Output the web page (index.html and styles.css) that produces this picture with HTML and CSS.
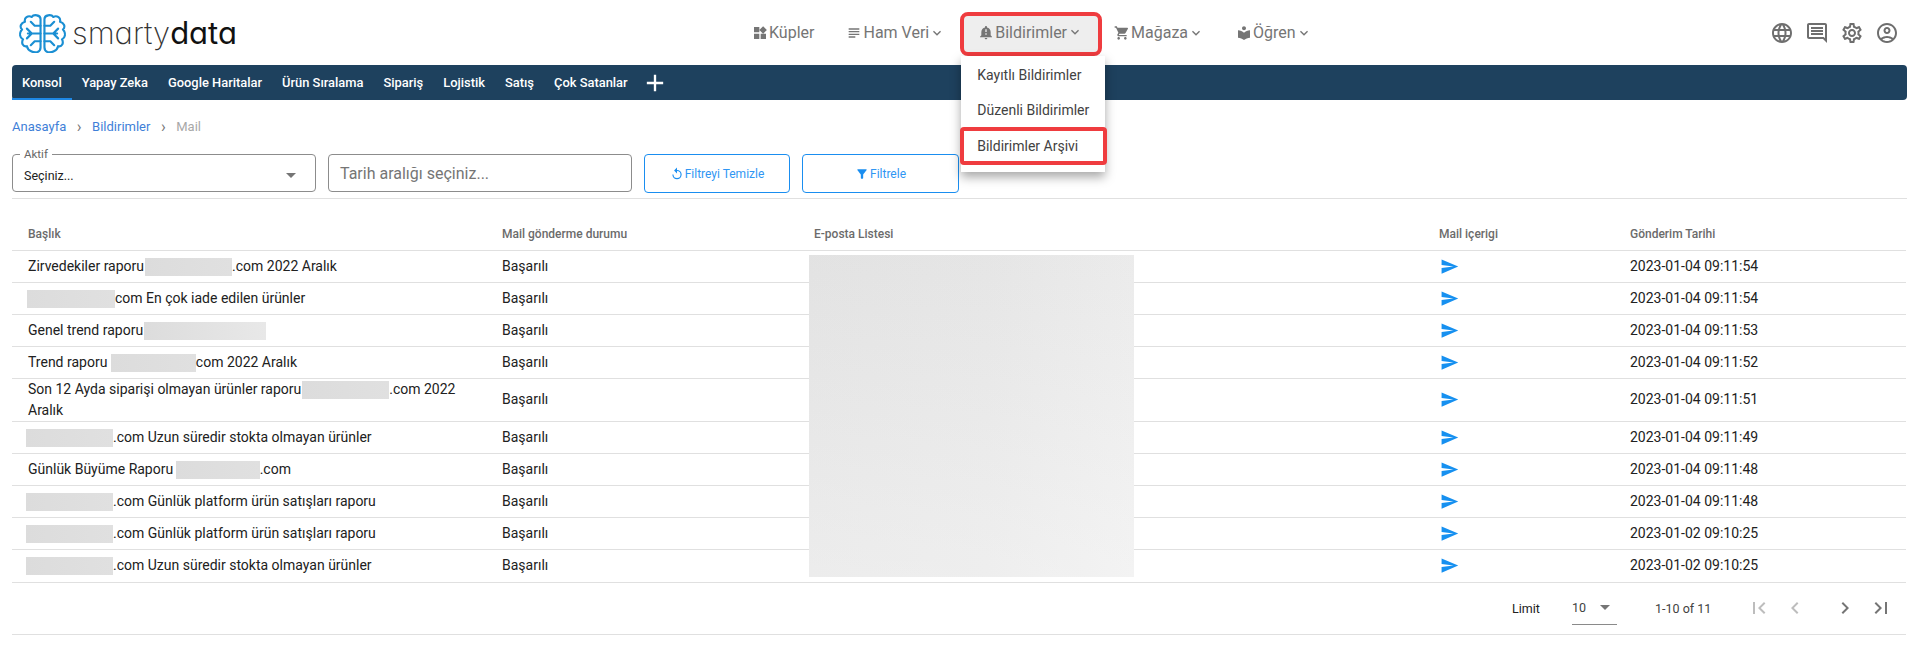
FILE: index.html
```html
<!DOCTYPE html>
<html lang="tr">

<head>
  <meta charset="UTF-8">
  <meta name="viewport" content="width=device-width, initial-scale=1.0">
  <title>Bildirimler - Mail</title>
  <link rel="stylesheet" href="styles.css">
</head>

<body>
  <svg class="sprite" aria-hidden="true">
    <symbol id="i-chevron" viewBox="0 0 24 24"><path d="M16.59 8.59 12 13.17 7.41 8.59 6 10l6 6 6-6z"/></symbol>
    <symbol id="i-send" viewBox="0 0 24 24"><path d="M2.01 21 23 12 2.01 3 2 10l15 2-15 2z"/></symbol>
    <symbol id="i-lobe" viewBox="0 0 24 40">
      <g fill="none" stroke="#1b8fd3" stroke-width="2.2" stroke-linecap="round" stroke-linejoin="round">
        <path d="M22 5C22 1 15 0 13 3 9 1 5 4 6 8 2 9 0 13 3 16 0 19 0 24 4 26 2 30 4 34 8 33 9 38 15 40 19 39 21 38 22 37 22 34Z"/>
        <path d="M22 12H16L12 8M22 20H9M13 20 8 15M13 20 8 25M22 28H16L12 32"/>
      </g>
    </symbol>
  </svg>

  <header class="topbar">
    <a class="logo" href="#">
      <svg class="logo-mark" viewBox="0 0 48 40">
        <use href="#i-lobe" x="0" y="0" width="24" height="40"/>
        <use href="#i-lobe" x="-48" y="0" width="24" height="40" transform="scale(-1 1)"/>
      </svg>
      <span class="logo-text">smarty<b>data</b></span>
    </a>

    <nav class="main-nav">
      <a class="nav-item">
        <svg class="nav-icon" viewBox="0 0 24 24"><path d="M13 13v8h8v-8h-8zM3 21h8v-8H3v8zM3 3v8h8V3H3zm13.66-1.31L11 7.34 16.66 13l5.66-5.66-5.66-5.65z"/></svg>
        Küpler
      </a>
      <a class="nav-item">
        <svg class="nav-icon" viewBox="0 0 24 24"><path d="M14 17H4v2h10v-2zm6-8H4v2h16V9zM4 15h16v-2H4v2zM4 5v2h16V5H4z"/></svg>
        Ham Veri
        <svg class="nav-chevron"><use href="#i-chevron"/></svg>
      </a>
      <div class="nav-item nav-item-open">
        <svg class="nav-icon" viewBox="0 0 24 24"><path d="M12 23c1.1 0 1.99-.89 1.99-1.99h-3.98c0 1.1.89 1.99 1.99 1.99zm7-6v-5c0-3.35-2.36-6.15-5.5-6.83V4.5c0-.83-.67-1.5-1.5-1.5s-1.5.67-1.5 1.5v.67C7.36 5.85 5 8.65 5 12v5l-2 2v1h18v-1l-2-2zm-6-1h-2v-2h2v2zm0-4h-2V8h2v4z"/></svg>
        Bildirimler
        <svg class="nav-chevron"><use href="#i-chevron"/></svg>
        <ul class="dropdown">
          <li>Kayıtlı Bildirimler</li>
          <li>Düzenli Bildirimler</li>
          <li class="marked">Bildirimler Arşivi</li>
        </ul>
      </div>
      <a class="nav-item">
        <svg class="nav-icon" viewBox="0 0 24 24"><path d="M7 18c-1.1 0-1.99.9-1.99 2S5.9 22 7 22s2-.9 2-2-.9-2-2-2zM1 2v2h2l3.6 7.59-1.35 2.45c-.16.28-.25.61-.25.96 0 1.1.9 2 2 2h12v-2H7.42c-.14 0-.25-.11-.25-.25l.03-.12.9-1.63h7.45c.75 0 1.41-.41 1.75-1.03l3.58-6.49c.08-.14.12-.31.12-.48 0-.55-.45-1-1-1H5.21l-.94-2H1zm16 16c-1.1 0-1.99.9-1.99 2s.89 2 1.99 2 2-.9 2-2-.9-2-2-2z"/></svg>
        Mağaza
        <svg class="nav-chevron"><use href="#i-chevron"/></svg>
      </a>
      <a class="nav-item">
        <svg class="nav-icon" viewBox="0 0 24 24"><path d="M12 11.55C9.64 9.35 6.48 8 3 8v11c3.48 0 6.64 1.35 9 3.55 2.36-2.19 5.52-3.55 9-3.55V8c-3.48 0-6.64 1.35-9 3.55zM12 8c1.66 0 3-1.34 3-3s-1.34-3-3-3-3 1.34-3 3 1.34 3 3 3z"/></svg>
        Öğren
        <svg class="nav-chevron"><use href="#i-chevron"/></svg>
      </a>
    </nav>

    <div class="top-icons">
      <svg viewBox="0 0 24 24"><path d="M11.99 2C6.47 2 2 6.48 2 12s4.47 10 9.99 10C17.52 22 22 17.52 22 12S17.52 2 11.99 2zm6.93 6h-2.95c-.32-1.25-.78-2.45-1.38-3.56 1.84.63 3.37 1.91 4.33 3.56zM12 4.04c.83 1.2 1.48 2.53 1.91 3.96h-3.82c.43-1.43 1.08-2.76 1.91-3.96zM4.26 14C4.1 13.36 4 12.69 4 12s.1-1.36.26-2h3.38c-.08.66-.14 1.32-.14 2s.06 1.34.14 2H4.26zm.82 2h2.95c.32 1.25.78 2.45 1.38 3.56-1.84-.63-3.37-1.9-4.33-3.56zm2.95-8H5.08c.96-1.66 2.49-2.93 4.33-3.56C8.81 5.55 8.35 6.75 8.03 8zM12 19.96c-.83-1.2-1.48-2.53-1.91-3.96h3.82c-.43 1.43-1.08 2.76-1.91 3.96zM14.34 14H9.66c-.09-.66-.16-1.32-.16-2s.07-1.35.16-2h4.68c.09.65.16 1.32.16 2s-.07 1.34-.16 2zm.25 5.56c.6-1.11 1.06-2.31 1.38-3.56h2.95c-.96 1.65-2.49 2.93-4.33 3.56zM16.36 14c.08-.66.14-1.32.14-2s-.06-1.34-.14-2h3.38c.16.64.26 1.31.26 2s-.1 1.36-.26 2h-3.38z"/></svg>
      <svg viewBox="0 0 24 24"><path d="M21.99 4c0-1.1-.89-2-1.99-2H4c-1.1 0-2 .9-2 2v12c0 1.1.9 2 2 2h14l4 4-.01-18zM20 4v13.17L18.83 16H4V4h16zM6 12h12v2H6zm0-3h12v2H6zm0-3h12v2H6z"/></svg>
      <svg viewBox="0 0 24 24"><path d="M19.43 12.98c.04-.32.07-.64.07-.98 0-.34-.03-.66-.07-.98l2.11-1.65c.19-.15.24-.42.12-.64l-2-3.46c-.09-.16-.26-.25-.44-.25-.06 0-.12.01-.17.03l-2.49 1c-.52-.4-1.08-.73-1.69-.98l-.38-2.65C14.46 2.18 14.25 2 14 2h-4c-.25 0-.46.18-.49.42l-.38 2.65c-.61.25-1.17.59-1.69.98l-2.49-1c-.06-.02-.12-.03-.18-.03-.17 0-.34.09-.43.25l-2 3.46c-.13.22-.07.49.12.64l2.11 1.65c-.04.32-.07.65-.07.98 0 .33.03.66.07.98l-2.11 1.65c-.19.15-.24.42-.12.64l2 3.46c.09.16.26.25.44.25.06 0 .12-.01.17-.03l2.49-1c.52.4 1.08.73 1.69.98l.38 2.65c.03.24.24.42.49.42h4c.25 0 .46-.18.49-.42l.38-2.65c.61-.25 1.17-.59 1.69-.98l2.49 1c.06.02.12.03.18.03.17 0 .34-.09.43-.25l2-3.46c.12-.22.07-.49-.12-.64l-2.11-1.65zm-1.98-1.71c.04.31.05.52.05.73 0 .21-.02.43-.05.73l-.14 1.13.89.7 1.08.84-.7 1.21-1.27-.51-1.04-.42-.9.68c-.43.32-.84.56-1.25.73l-1.06.43-.16 1.13-.2 1.35h-1.4l-.19-1.35-.16-1.13-1.06-.43c-.43-.18-.83-.41-1.23-.71l-.91-.7-1.06.43-1.27.51-.7-1.21 1.08-.84.89-.7-.14-1.13c-.03-.31-.05-.54-.05-.74s.02-.43.05-.73l.14-1.13-.89-.7-1.08-.84.7-1.21 1.27.51 1.04.42.9-.68c.43-.32.84-.56 1.25-.73l1.06-.43.16-1.13.2-1.35h1.39l.19 1.35.16 1.13 1.06.43c.43.18.83.41 1.23.71l.91.7 1.06-.43 1.27-.51.7 1.21-1.07.85-.89.7.14 1.13zM12 8c-2.21 0-4 1.79-4 4s1.79 4 4 4 4-1.79 4-4-1.79-4-4-4zm0 6c-1.1 0-2-.9-2-2s.9-2 2-2 2 .9 2 2-.9 2-2 2z"/></svg>
      <svg viewBox="0 0 24 24"><path d="M12 2C6.48 2 2 6.48 2 12s4.48 10 10 10 10-4.48 10-10S17.52 2 12 2zM7.35 18.5C8.66 17.56 10.26 17 12 17s3.34.56 4.65 1.5c-1.31.94-2.91 1.5-4.65 1.5s-3.34-.56-4.65-1.5zm10.79-1.38C16.45 15.8 14.32 15 12 15s-4.45.8-6.14 2.12C4.7 15.73 4 13.95 4 12c0-4.42 3.58-8 8-8s8 3.58 8 8c0 1.95-.7 3.73-1.86 5.12zM12 6c-1.93 0-3.5 1.57-3.5 3.5S10.07 13 12 13s3.5-1.57 3.5-3.5S13.93 6 12 6zm0 5c-.83 0-1.5-.67-1.5-1.5S11.17 8 12 8s1.5.67 1.5 1.5S12.83 11 12 11z"/></svg>
    </div>
  </header>

  <main class="content">
    <div class="tabs">
      <a class="tab active">Konsol</a>
      <a class="tab">Yapay Zeka</a>
      <a class="tab">Google Haritalar</a>
      <a class="tab">Ürün Sıralama</a>
      <a class="tab">Sipariş</a>
      <a class="tab">Lojistik</a>
      <a class="tab">Satış</a>
      <a class="tab">Çok Satanlar</a>
      <a class="tab tab-add">
        <svg viewBox="0 0 24 24"><path d="M19 13h-6v6h-2v-6H5v-2h6V5h2v6h6v2z"/></svg>
      </a>
    </div>

    <div class="breadcrumb">
      <a>Anasayfa</a><span class="sep">›</span><a>Bildirimler</a><span class="sep">›</span><span class="current">Mail</span>
    </div>

    <div class="filters">
      <div class="field select-field">
        <span class="field-label">Aktif</span>
        <span>Seçiniz...</span>
        <span class="select-arrow"></span>
      </div>
      <div class="field date-field">Tarih aralığı seçiniz...</div>
      <button class="btn">
        <svg viewBox="0 0 24 24" class="btn-reset"><path d="M12 5V1l5 5-5 5V7a6 6 0 1 0 6 6h2a8 8 0 1 1-8-8z"/></svg>
        Filtreyi Temizle
      </button>
      <button class="btn">
        <svg viewBox="0 0 24 24"><path d="M4.25 5.61C6.27 8.2 10 13 10 13v6c0 .55.45 1 1 1h2c.55 0 1-.45 1-1v-6s3.72-4.8 5.74-7.39c.51-.66.04-1.61-.79-1.61H5.04c-.83 0-1.3.95-.79 1.61z"/></svg>
        Filtrele
      </button>
    </div>

    <div class="table-wrap">
      <table class="grid">
        <colgroup>
          <col class="c-title"><col class="c-status"><col class="c-list"><col class="c-body"><col class="c-date">
        </colgroup>
        <thead>
          <tr><th>Başlık</th><th>Mail gönderme durumu</th><th>E-posta Listesi</th><th>Mail içerigi</th><th>Gönderim Tarihi</th></tr>
        </thead>
        <tbody>
          <tr><td>Zirvedekiler raporu<span class="blur"></span>.com 2022 Aralık</td><td>Başarılı</td><td></td><td><svg class="send"><use href="#i-send"/></svg></td><td>2023-01-04 09:11:54</td></tr>
          <tr><td><span class="blur lead long"></span>com En çok iade edilen ürünler</td><td>Başarılı</td><td></td><td><svg class="send"><use href="#i-send"/></svg></td><td>2023-01-04 09:11:54</td></tr>
          <tr><td>Genel trend raporu<span class="blur wide"></span></td><td>Başarılı</td><td></td><td><svg class="send"><use href="#i-send"/></svg></td><td>2023-01-04 09:11:53</td></tr>
          <tr><td>Trend raporu <span class="blur spaced"></span>com 2022 Aralık</td><td>Başarılı</td><td></td><td><svg class="send"><use href="#i-send"/></svg></td><td>2023-01-04 09:11:52</td></tr>
          <tr><td>Son 12 Ayda siparişi olmayan ürünler raporu<span class="blur"></span>.com 2022 Aralık</td><td>Başarılı</td><td></td><td><svg class="send"><use href="#i-send"/></svg></td><td>2023-01-04 09:11:51</td></tr>
          <tr><td><span class="blur lead"></span>.com Uzun süredir stokta olmayan ürünler</td><td>Başarılı</td><td></td><td><svg class="send"><use href="#i-send"/></svg></td><td>2023-01-04 09:11:49</td></tr>
          <tr><td>Günlük Büyüme Raporu <span class="blur spaced short"></span>.com</td><td>Başarılı</td><td></td><td><svg class="send"><use href="#i-send"/></svg></td><td>2023-01-04 09:11:48</td></tr>
          <tr><td><span class="blur lead"></span>.com Günlük platform ürün satışları raporu</td><td>Başarılı</td><td></td><td><svg class="send"><use href="#i-send"/></svg></td><td>2023-01-04 09:11:48</td></tr>
          <tr><td><span class="blur lead"></span>.com Günlük platform ürün satışları raporu</td><td>Başarılı</td><td></td><td><svg class="send"><use href="#i-send"/></svg></td><td>2023-01-02 09:10:25</td></tr>
          <tr class="last-row"><td><span class="blur lead"></span>.com Uzun süredir stokta olmayan ürünler</td><td>Başarılı</td><td></td><td><svg class="send"><use href="#i-send"/></svg></td><td>2023-01-02 09:10:25</td></tr>
        </tbody>
      </table>
      <div class="list-blur"></div>
    </div>

    <div class="pager">
      <span class="pager-limit">Limit</span>
      <span class="pager-select">10<span class="select-arrow"></span></span>
      <span class="pager-count">1-10 of 11</span>
      <svg class="pager-btn off" viewBox="0 0 24 24"><path d="M18.41 16.59 13.82 12l4.59-4.59L17 6l-6 6 6 6zM6 6h2v12H6z"/></svg>
      <svg class="pager-btn off prev" viewBox="0 0 24 24"><path d="M15.41 7.41 14 6l-6 6 6 6 1.41-1.41L10.83 12z"/></svg>
      <svg class="pager-btn" viewBox="0 0 24 24"><path d="M10 6 8.59 7.41 13.17 12l-4.58 4.59L10 18l6-6z"/></svg>
      <svg class="pager-btn" viewBox="0 0 24 24"><path d="M5.59 7.41 10.18 12l-4.59 4.59L7 18l6-6-6-6zM16 6h2v12h-2z"/></svg>
    </div>
  </main>
</body>

</html>
```

FILE: styles.css
```css
* {
  margin: 0;
  padding: 0;
  box-sizing: border-box;
}

body {
  font-family: Roboto, "Liberation Sans", sans-serif;
  font-size: 14px;
  color: #212121;
  background: #fff;
  overflow: hidden;
}

.sprite {
  display: none;
}

/* top bar */
.topbar {
  display: flex;
  align-items: center;
  height: 65px;
  padding: 0 21px 0 19px;
}

.logo {
  display: flex;
  align-items: center;
  width: 717px;
  color: #111;
  text-decoration: none;
}

.logo-mark {
  width: 47px;
  height: 39px;
  margin-top: 1px;
}

.logo-text {
  margin-left: 6px;
  font-family: Inter, sans-serif;
  font-feature-settings: "cv11";
  font-size: 31px;
  font-weight: 200;
  line-height: 40px;
  color: #333;
}

.logo-text b {
  font-weight: 400;
  color: #111;
}

.main-nav {
  display: flex;
  align-items: center;
}

.nav-item {
  position: relative;
  display: flex;
  align-items: center;
  height: 38px;
  padding: 0 16px;
  font-size: 16px;
  color: #757575;
  white-space: nowrap;
}

.nav-icon {
  width: 16px;
  height: 16px;
  margin-right: 1px;
  fill: #757575;
}

.nav-chevron {
  width: 16px;
  height: 16px;
  fill: #757575;
}

.nav-item-open {
  height: 36px;
  margin: 3px 0 0 3px;
  padding: 0 15px 4px 14px;
  background: #eee;
  border-radius: 4px;
  outline: 4px solid #ef3c3f;
  z-index: 2;
}

.dropdown {
  position: absolute;
  top: 40px;
  left: -3px;
  width: 144px;
  padding: 2px 0 7px;
  list-style: none;
  background: #fff;
  box-shadow: 0 5px 10px rgba(0, 0, 0, 0.35);
}

.dropdown li {
  height: 35px;
  padding-left: 16px;
  font-size: 14px;
  line-height: 35px;
  color: #424242;
}

.dropdown li.marked {
  position: relative;
  width: 147px;
  height: 38px;
  margin: -1px 0 0 -1px;
  padding-left: 13px;
  line-height: 30px;
  background: #fff;
  border: 4px solid #ef3c3f;
  border-radius: 4px;
}

.top-icons {
  display: flex;
  gap: 11px;
  margin-left: auto;
}

.top-icons svg {
  width: 24px;
  height: 24px;
  fill: #6e6e6e;
}

.content {
  padding: 0 13px 0 12px;
}

/* tabs */
.tabs {
  display: flex;
  align-items: stretch;
  height: 35px;
  background: #1e415e;
  border-radius: 4px;
}

.tab {
  display: flex;
  align-items: center;
  padding: 2px 10px 0;
  font-size: 12.9px;
  font-weight: 500;
  color: #fff;
  border-bottom: 2px solid transparent;
}

.tab.active {
  border-bottom-color: #1e88e5;
}

.tab-add svg {
  width: 28px;
  height: 28px;
  margin-left: -7px;
  fill: #fff;
}

/* breadcrumb */
.breadcrumb {
  display: flex;
  align-items: center;
  height: 18px;
  margin-top: 17px;
  font-size: 13px;
  color: #3f7fd8;
}

.breadcrumb .sep {
  margin: 0 10.5px;
  font-size: 16px;
  color: #757575;
}

.breadcrumb .current {
  color: #a8a8a8;
}

/* filters */
.filters {
  display: flex;
  gap: 12px;
  height: 45px;
  margin-top: 19px;
  padding-bottom: 6px;
  border-bottom: 1px solid #e0e0e0;
}

.field {
  position: relative;
  display: flex;
  align-items: center;
  width: 304px;
  border: 1px solid #8c8c8c;
  border-radius: 4px;
}

.select-field {
  justify-content: space-between;
  padding: 4px 11px 0;
  font-size: 12.5px;
}

.field-label {
  position: absolute;
  top: -7px;
  left: 7px;
  padding: 0 4px;
  font-size: 11.5px;
  line-height: 13px;
  color: #666;
  background: #fff;
}

.select-arrow {
  display: inline-block;
  border-top: 5px solid #757575;
  border-left: 5px solid transparent;
  border-right: 5px solid transparent;
}

.select-field .select-arrow {
  margin-right: 8px;
}

.date-field {
  padding-left: 11px;
  font-size: 16px;
  color: #757575;
}

.btn {
  display: flex;
  align-items: center;
  justify-content: center;
  gap: 1px;
  width: 146px;
  height: 39px;
  font-family: inherit;
  font-size: 12px;
  color: #2f96f3;
  background: #fff;
  border: 1px solid #1a8ef0;
  border-radius: 4px;
}

.btn + .btn {
  width: 157px;
}

.btn svg {
  width: 14px;
  height: 14px;
  fill: #1a8ef0;
}

.btn-reset {
  transform: scaleX(-1);
}

/* table */
.table-wrap {
  position: relative;
  width: 1894px;
}

.grid {
  width: 100%;
  table-layout: fixed;
  border-collapse: collapse;
}

.c-title { width: 474px; }
.c-status { width: 312px; }
.c-list { width: 625px; }
.c-body { width: 191px; }

.grid th {
  height: 51px;
  padding: 19px 16px 0;
  font-size: 12px;
  font-weight: 500;
  text-align: left;
  color: #6b6b6b;
  border-bottom: 1px solid #e0e0e0;
}

.grid td {
  height: 32px;
  padding: 0 16px;
  font-size: 14px;
  line-height: 21px;
  border-bottom: 1px solid #e0e0e0;
}

.grid .last-row td {
  height: 33px;
}

.blur {
  display: inline-block;
  width: 87px;
  height: 18px;
  margin-left: 1px;
  vertical-align: middle;
  background: linear-gradient(90deg, #dcdcdc, #e0e0e0);
}

.blur.lead {
  margin-left: -2px;
}

.blur.lead.long {
  width: 88px;
  margin-left: -1px;
}

.blur.spaced {
  width: 85px;
  margin-left: 0;
}

.blur.spaced.short {
  width: 84px;
  margin-left: -1px;
}

.blur.wide {
  width: 122px;
  background: linear-gradient(90deg, #dcdcdc, #e8e8e8);
}

.send {
  display: block;
  width: 19px;
  height: 19px;
  margin-left: 1px;
  fill: #1690f0;
}

.list-blur {
  position: absolute;
  top: 56px;
  left: 797px;
  width: 325px;
  height: 322px;
  background:
    linear-gradient(180deg, rgba(0, 0, 0, 0.015), rgba(255, 255, 255, 0.25)),
    linear-gradient(90deg, #e6e6e6, #e9e9e9 55%, #efefef);
}

/* pager */
.pager {
  display: flex;
  align-items: center;
  width: 1894px;
  height: 52px;
  font-size: 12.5px;
  border-bottom: 1px solid #e0e0e0;
}

.pager-limit {
  width: 60px;
  margin-left: 1500px;
}

.pager-select {
  display: flex;
  align-items: center;
  justify-content: space-between;
  width: 45px;
  height: 33px;
  padding-right: 7px;
  color: #424242;
  border-bottom: 1px solid #8a8a8a;
}

.pager-count {
  width: 92px;
  margin-left: 38px;
  color: #424242;
}

.pager-btn {
  width: 24px;
  height: 24px;
  margin-right: 12px;
  fill: #757575;
}

.pager-btn.off {
  fill: #bdbdbd;
}

.pager-btn.prev {
  margin-right: 26px;
}
```
